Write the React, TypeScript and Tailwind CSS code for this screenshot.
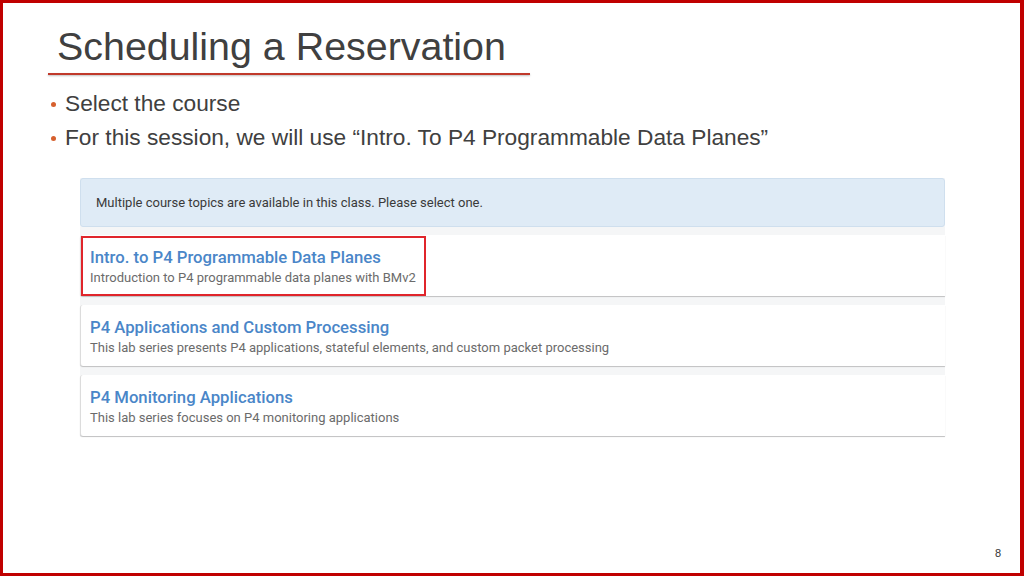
import React from "react";

const courses = [
  {
    title: "Intro. to P4 Programmable Data Planes",
    sub: "Introduction to P4 programmable data planes with BMv2",
    highlight: true,
  },
  {
    title: "P4 Applications and Custom Processing",
    sub: "This lab series presents P4 applications, stateful elements, and custom packet processing",
    highlight: false,
  },
  {
    title: "P4 Monitoring Applications",
    sub: "This lab series focuses on P4 monitoring applications",
    highlight: false,
  },
];

export default function App() {
  return (
    <div
      className="relative w-[1024px] h-[576px] overflow-hidden bg-white border-[3px] border-r-[4px] border-[#c00000]"
      style={{ fontFamily: '"Liberation Sans", Arial, sans-serif' }}
    >
      <div className="flex flex-col">
        <div className="pl-[54px] pt-[24px] text-[39.4px] leading-none text-[#404040]">
          Scheduling a Reservation
        </div>
        <div className="ml-[45px] mt-[7px] w-[482px] h-[2px] bg-[#c0392b] shadow-[0_1px_2px_rgba(0,0,0,0.25)]" />
        <div className="mt-[11px] flex flex-col text-[22.7px] leading-[34px] text-[#404040]">
          <div className="flex items-center pl-[48px]">
            <span className="mt-[2px] w-[5px] h-[5px] rounded-full bg-[#d6602e]" />
            <span className="ml-[9px]">Select the course</span>
          </div>
          <div className="flex items-center pl-[48px]">
            <span className="mt-[2px] w-[5px] h-[5px] rounded-full bg-[#d6602e]" />
            <span className="ml-[9px]">For this session, we will use “Intro. To P4 Programmable Data Planes”</span>
          </div>
        </div>

        <div
          className="ml-[77px] mt-[24px] w-[865px] flex flex-col bg-[#f5f6f7]"
          style={{ fontFamily: 'Roboto, "Liberation Sans", sans-serif' }}
        >
          <div className="h-[49px] flex items-center pl-[15px] bg-[#dfebf6] border border-[#cfdfee] rounded-[3px] text-[13px] text-[#3a3a3a]">
            Multiple course topics are available in this class. Please select one.
          </div>
          <div className="flex flex-col gap-[9px] pt-[8px] pb-[1px]">
            {courses.map((c) => (
              <div
                key={c.title}
                className="relative h-[61px] bg-white border-l border-[#dcdcdc] rounded-l-[3px] shadow-[0_1px_1px_rgba(0,0,0,0.22)] flex flex-col justify-center pl-[9px] pt-[3px]"
              >
                <div className="text-[16.7px] leading-[20px] font-medium text-[#4a86c8]">{c.title}</div>
                <div className="text-[13px] leading-[19px] text-[#6b6b6b]">{c.sub}</div>
                {c.highlight && (
                  <div className="absolute left-0 top-[1px] w-[345px] h-[60px] border-2 border-[#e0252b]" />
                )}
              </div>
            ))}
          </div>
        </div>
      </div>

      <div className="absolute right-[19px] bottom-[12px] text-[11px] text-[#333]">8</div>
    </div>
  );
}
